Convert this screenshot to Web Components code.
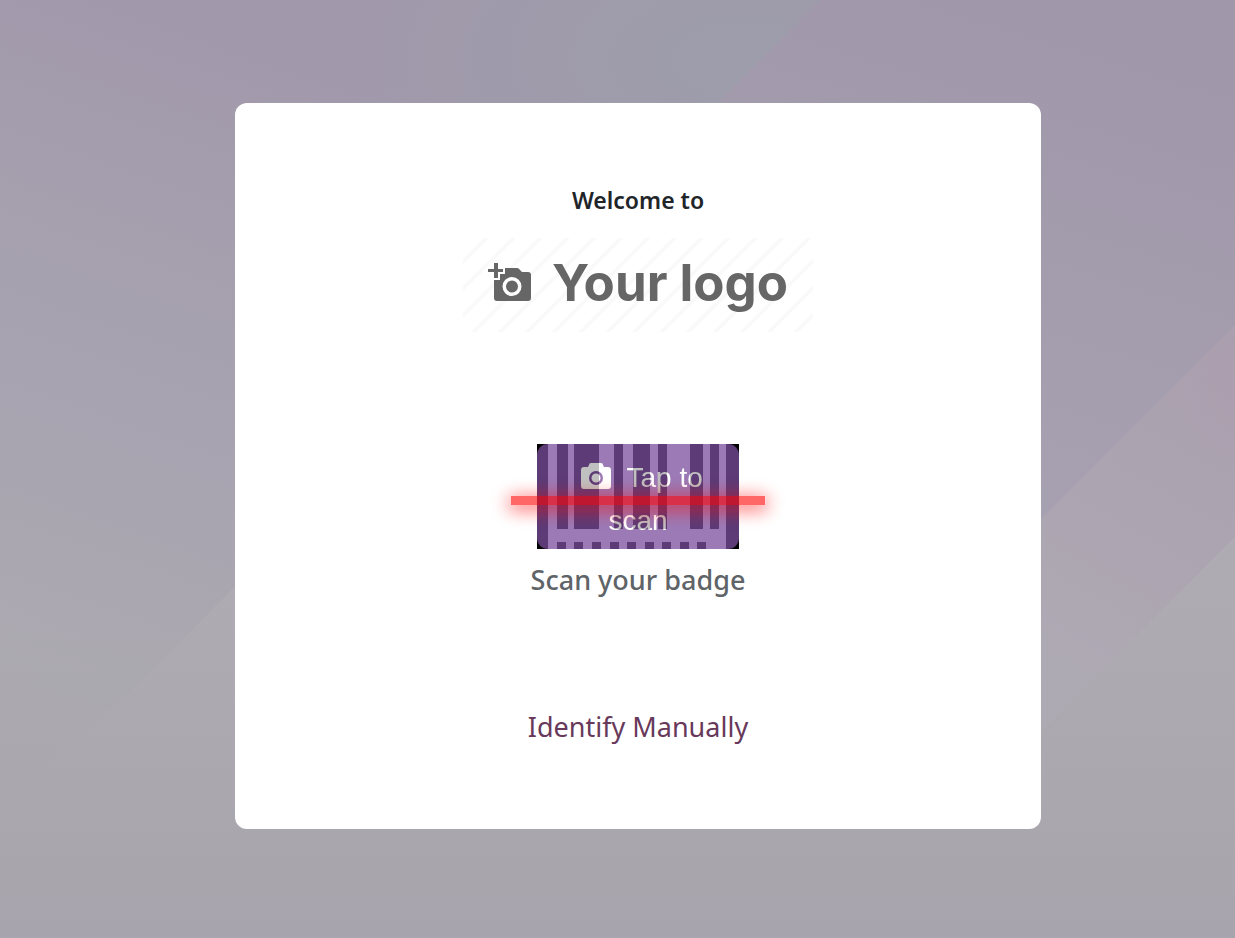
<!DOCTYPE html>
<html lang="en">
<head>
<meta charset="utf-8">
<title>Attendance kiosk</title>
<style>
body { margin: 0; font-family: "Noto Sans", "Open Sans", sans-serif; color: #212529; }
</style>
</head>
<body>
<kiosk-page>
  <kiosk-card>
    <h5 slot="welcome">Welcome to</h5>
    <company-logo slot="logo">Your logo</company-logo>
    <badge-scanner slot="scanner">Tap to scan</badge-scanner>
    <h4 slot="caption">Scan your badge</h4>
    <kiosk-link slot="manual">Identify Manually</kiosk-link>
  </kiosk-card>
</kiosk-page>

<script>
function define(name, html) {
  const template = document.createElement('template');
  template.innerHTML = html;
  customElements.define(name, class extends HTMLElement {
    constructor() {
      super();
      this.attachShadow({ mode: 'open' }).append(template.content.cloneNode(true));
    }
  });
}

define('kiosk-page', `
<style>
:host { display: grid; grid-template-columns: 235fr 806fr 194fr; align-items: start; min-height: 100vh; box-sizing: border-box; padding: 103px 0; position: relative; isolation: isolate; overflow: hidden; background: #a9a6af; }
svg { position: absolute; inset: 0; width: 100%; height: 100%; z-index: -1; }
main { grid-column: 2; min-width: 0; }
</style>
<svg viewBox="0 0 1235 938" preserveAspectRatio="none" aria-hidden="true">
  <defs>
    <linearGradient id="base" gradientUnits="userSpaceOnUse" x1="330" y1="60" x2="100" y2="720">
      <stop offset="0" stop-color="#a199ab"/><stop offset="0.5" stop-color="#a7a2b0"/><stop offset="1" stop-color="#acaab1"/>
    </linearGradient>
    <linearGradient id="right" gradientUnits="userSpaceOnUse" x1="1180" y1="60" x2="1000" y2="640">
      <stop offset="0" stop-color="#a098aa"/><stop offset="1" stop-color="#a8a3b2"/>
    </linearGradient>
    <radialGradient id="blue"><stop offset="0" stop-color="#9d9dab"/><stop offset="1" stop-color="#9d9dab" stop-opacity="0"/></radialGradient>
    <radialGradient id="pink"><stop offset="0" stop-color="#ad9dae"/><stop offset="1" stop-color="#ad9dae" stop-opacity="0"/></radialGradient>
    <linearGradient id="lower" gradientUnits="userSpaceOnUse" x1="0" y1="590" x2="0" y2="938"><stop offset="0" stop-color="#aeacb2"/><stop offset="0.6" stop-color="#aaa8ae"/><stop offset="1" stop-color="#a7a4ad"/></linearGradient>
    <linearGradient id="fade" gradientUnits="userSpaceOnUse" x1="0" y1="600" x2="0" y2="800"><stop offset="0" stop-color="#aaa8ae" stop-opacity="0"/><stop offset="1" stop-color="#aaa8ae"/></linearGradient>
    <linearGradient id="band" gradientUnits="userSpaceOnUse" x1="1235" y1="340" x2="1041" y2="680"><stop offset="0" stop-color="#aa9fae"/><stop offset="1" stop-color="#aeaab4"/></linearGradient>
  </defs>
  <rect width="1235" height="938" fill="url(#base)"/>
  <ellipse cx="740" cy="60" rx="400" ry="220" fill="url(#blue)"/>
  <path d="M820 0L717 103V938H1235V0Z" fill="url(#right)"/>
  <rect width="760" height="338" y="600" fill="url(#fade)"/>
  <path d="M235 587L145 677Q60 755 0 800V938H760V587Z" fill="url(#lower)"/>
  <path d="M1235 325L700 860V938H1235Z" fill="url(#band)"/>
  <path d="M1235 537L1041 731L700 829V938H1235Z" fill="url(#lower)"/>
  <ellipse cx="1235" cy="395" rx="55" ry="70" fill="url(#pink)" opacity="0.6"/>
</svg>
<main><slot></slot></main>`);

define('kiosk-card', `
<style>
:host { display: flex; flex-direction: column; align-items: center; background: #fff; border-radius: 12px; padding: 79px 24px 81px; text-align: center; }
.welcome { margin-bottom: 20px; }
.scanner { margin: 112px 0 11px; }
.manual { margin-top: 106px; }
::slotted(h5) { margin: 0; font-size: 23px; font-weight: 600; line-height: 36px; }
::slotted(h4) { margin: 0; font-size: 27px; font-weight: 500; line-height: 40px; color: #5f6468; }
</style>
<div class="welcome"><slot name="welcome"></slot></div>
<slot name="logo"></slot>
<div class="scanner"><slot name="scanner"></slot></div>
<slot name="caption"></slot>
<div class="manual"><slot name="manual"></slot></div>`);

define('company-logo', `
<style>
:host { display: flex; align-items: center; justify-content: center; gap: 20px; width: 350px; max-width: 100%; height: 94px; box-sizing: border-box; padding-bottom: 4px; color: #666; font: 700 51px/60px Inter, sans-serif; white-space: nowrap; background: repeating-linear-gradient(135deg, #fff 0 14px, #f9f9f9 16px 18px, #fff 19px); }
svg { width: 44px; height: 40px; flex: none; }
</style>
<svg viewBox="0 0 44 40" aria-hidden="true">
  <path fill="#666" d="M6 0h4v6h5v3h-5v6H6V9H0V6h6z"/>
  <path fill="#666" fill-rule="evenodd" d="M17 5h12q2 0 3 2l2 2h6q3 0 3 3v23q0 3-3 3H9q-3 0-3-3V17h6v-6h5zM24 14a9.500 9.500 0 1 0 0 19a9.500 9.500 0 1 0 0-19zm0 3.500a6 6 0 1 1 0 12a6 6 0 1 1 0-12z"/>
</svg>
<span><slot></slot></span>`);

define('badge-scanner', `
<style>
:host { display: block; position: relative; width: 202px; height: 105px; background: #000; isolation: isolate; }
button { display: block; width: 100%; height: 100%; border: 0; border-radius: 11px; padding: 12px 30px 10px; background: #9b7ab5; color: #fff; font: 28px/43px "Liberation Sans", Arial, sans-serif; cursor: pointer; }
.camera { width: 30px; height: 27px; margin: 0 8px; vertical-align: -3px; }
.bars { position: absolute; inset: 0; width: 100%; height: 100%; border-radius: 11px; mix-blend-mode: difference; pointer-events: none; }
.laser { position: absolute; left: -26px; right: -26px; top: 52px; height: 9px; background: #f00; box-shadow: 0 3px 18px 2px #f00; opacity: 0.6; pointer-events: none; }
</style>
<button type="button"><svg class="camera" viewBox="0 0 30 27" aria-hidden="true"><path fill="#fff" fill-rule="evenodd" d="M10 0h10q2 0 2 2l1 2h4q3 0 3 3v16q0 3-3 3H3q-3 0-3-3V7q0-3 3-3h4l1-2q0-2 2-2zM15 8a7 7 0 1 0 0 14a7 7 0 1 0 0-14zm0 2.500a4.500 4.500 0 1 1 0 9a4.500 4.500 0 1 1 0-9z"/></svg> <slot></slot></button>
<svg class="bars" viewBox="0 0 202 105" preserveAspectRatio="none" aria-hidden="true" fill="#3f3f3f">
  <path d="M0 0h11v105H0zM189 0h13v105h-13zM20 0h11v85H20zM37 0h25v85H37zM77 0h9v85h-9zM96 0h17v85H96zM121 0h9v85h-9zM153 0h13v85h-13zM173 0h9v85h-9z"/>
  <path d="M20 98h9v7h-9zM37 98h9v7h-9zM55 98h9v7h-9zM73 98h9v7h-9zM90 98h9v7h-9zM108 98h9v7h-9zM125 98h9v7h-9zM143 98h9v7h-9zM160 98h9v7h-9z"/>
</svg>
<div class="laser"></div>`);

define('kiosk-link', `
<style>
:host { display: block; font-size: 27px; line-height: 42px; }
a { color: #68395a; text-decoration: none; }
</style>
<a href="#manual"><slot></slot></a>`);
</script>
</body>
</html>
